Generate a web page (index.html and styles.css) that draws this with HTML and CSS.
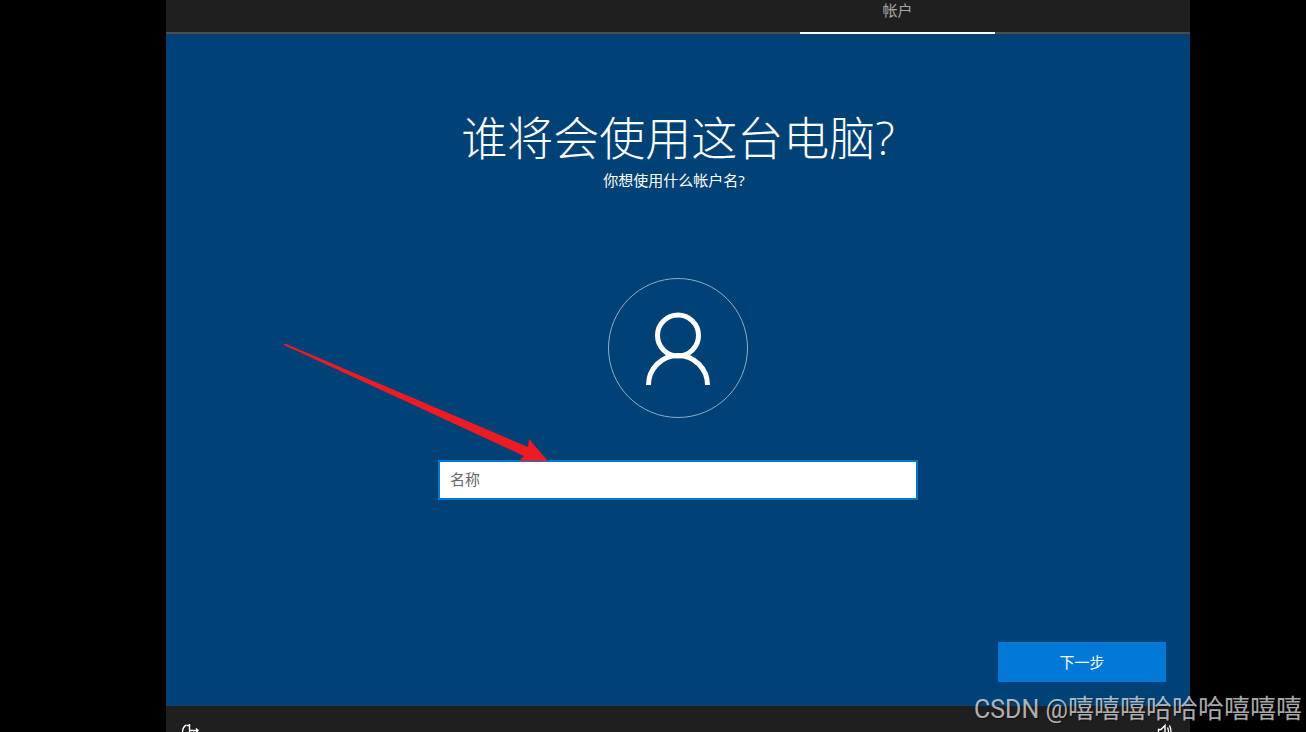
FILE: index.html
```html
<!DOCTYPE html>
<html lang="zh-CN">
<head>
<meta charset="utf-8">
<title>谁将会使用这台电脑?</title>
<link rel="stylesheet" href="styles.css">
</head>
<body>
<div class="screen">
  <nav class="steps"><a class="step" href="#account" aria-current="step">帐户</a></nav>
  <main class="panel" id="account">
    <h1 class="title">谁将会使用这台电脑?</h1>
    <p class="subtitle">你想使用什么帐户名?</p>
    <svg class="avatar" viewBox="0 0 140 140" aria-hidden="true">
      <circle class="avatar-ring" cx="70" cy="70" r="69.5"/>
      <circle class="avatar-line" cx="70" cy="57.500" r="20.500"/>
      <path class="avatar-line" d="M40.500 107a29.500 29.500 0 0 1 59 0"/>
    </svg>
    <form class="form" id="name-form">
      <input class="name" type="text" placeholder="名称" aria-label="名称">
      <svg class="arrow" viewBox="0 0 266 120" aria-hidden="true">
        <path d="M1 1L2 .5 245 104 246 96 265 118 236 118 241 113 1 2z"/>
      </svg>
    </form>
    <button class="next" type="submit" form="name-form">下一步</button>
  </main>
  <footer class="tray">
    <button class="tray-button" aria-label="轻松使用">
      <svg class="tray-icon" viewBox="0 0 20 20" aria-hidden="true"><path d="M2.500 10q0-5 4-7M9.500 2v16M7 3.500h2.500M9 8.500h9M16 6.500l2 2-2 2"/></svg>
    </button>
    <button class="tray-button" aria-label="音量">
      <svg class="tray-icon" viewBox="0 0 20 20" aria-hidden="true"><path d="M2.500 7.500h2.500l4-4v13l-4-4H2.500zM11.500 5.500q2 4 0 8M13.500 3.500q3 6 0 12"/></svg>
    </button>
  </footer>
</div>
<div class="watermark"><span class="watermark-site">CSDN @</span>嘻嘻嘻哈哈哈嘻嘻嘻</div>
</body>
</html>
```
FILE: styles.css
```css
* { box-sizing: border-box; }
body {
  margin: 0;
  padding: 0 116px 0 166px;
  height: 100vh;
  overflow: hidden;
  background: #000;
  color: #fff;
  font: 15px/20px "Open Sans", "Noto Sans CJK SC", sans-serif;
}
button, input { font: inherit; }
.screen {
  display: flex;
  flex-direction: column;
  height: 100vh;
  background: #1f1f1f;
}
.steps {
  display: flex;
  justify-content: flex-end;
  flex: none;
  height: 34px;
  padding-right: 195px;
  box-shadow: inset 0 -2px #4c4c4c;
}
.step {
  width: 195px;
  border-bottom: 2px solid #fff;
  color: #a6a6a6;
  text-align: center;
  text-decoration: none;
}
.panel {
  display: flex;
  flex: 1;
  flex-direction: column;
  align-items: center;
  padding: 73px 24px 24px;
  background: #004275;
}
.title {
  margin: 0;
  font-size: 46px;
  font-weight: 300;
  line-height: 60px;
}
.subtitle {
  margin: 3px 8px 0 0;
}
.avatar {
  width: 140px;
  margin-top: 88px;
  fill: none;
}
.avatar-ring { stroke: #8eafc6; stroke-width: 1; }
.avatar-line { stroke: #fff; stroke-width: 5; }
.form {
  position: relative;
  width: 480px;
  margin-top: 42px;
}
.name {
  display: block;
  width: 100%;
  height: 40px;
  padding: 0 10px 2px;
  border: 2px solid #0078d7;
  border-radius: 0;
  outline: 0;
  background: #fff;
  color: #000;
}
.name::placeholder { color: #666; opacity: 1; }
.arrow {
  position: absolute;
  top: -117px;
  left: -155px;
  width: 266px;
  fill: #ed1c24;
  pointer-events: none;
}
.next {
  width: 168px;
  height: 40px;
  margin-top: auto;
  align-self: flex-end;
  border: 0;
  background: #0078d7;
  color: #fff;
}
.tray {
  display: flex;
  justify-content: space-between;
  flex: none;
  height: 26px;
  padding: 16px 14px 0;
  overflow: hidden;
}
.tray-button {
  height: 20px;
  padding: 0;
  border: 0;
  background: none;
}
.tray-icon {
  display: block;
  width: 20px;
  fill: none;
  stroke: #fff;
  stroke-width: 1.4;
}
.watermark {
  position: absolute;
  right: 4px;
  bottom: 7px;
  color: rgba(255, 255, 255, .68);
  font: 26px/30px Roboto, "Noto Sans CJK SC", sans-serif;
  text-shadow: 1px 1px 1px rgba(0, 0, 0, .5);
  white-space: nowrap;
  pointer-events: none;
}
.watermark-site { font-size: 25px; }
```
